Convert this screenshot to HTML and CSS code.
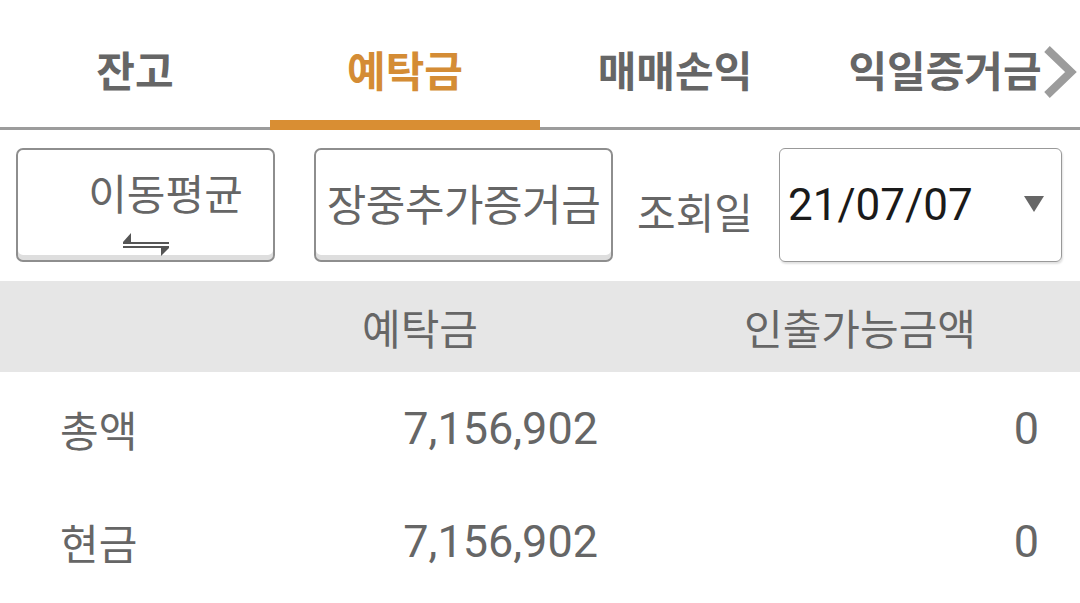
FILE: index.html
```html
<!DOCTYPE html>
<html lang="ko">
<head>
<meta charset="utf-8">
<link rel="stylesheet" href="styles.css">
</head>
<body>
<div class="tabs">
  <div class="tab">잔고</div>
  <div class="tab active">예탁금</div>
  <div class="tab">매매손익</div>
  <div class="tab last">익일증거금
    <svg class="chev" width="34" height="52" viewBox="0 0 34 52"><path d="M4 3 L28 26 L4 49" fill="none" stroke="#9c9c9c" stroke-width="8"/></svg>
  </div>
</div>
<div class="controls">
  <div class="btn btn-ma">
    <span class="btn-label">이동평균</span>
    <svg class="swap" width="48" height="24" viewBox="0 0 48 24"><path d="M1 10 H47 V12 H1 Z M1 10 L9 1 V10 Z" fill="#555"/><path d="M1 14 H47 V16 H1 Z M47 16 L39 24 V16 Z" fill="#555"/></svg>
  </div>
  <div class="btn btn-margin">장중추가증거금</div>
  <div class="date-label">조회일</div>
  <div class="select">
    <span class="date">21/07/07</span>
    <svg class="caret" width="20" height="17" viewBox="0 0 20 17"><path d="M0 1 H20 L10 17 Z" fill="#666"/></svg>
  </div>
</div>
<div class="table">
  <div class="row head">
    <div class="c1"></div>
    <div class="c2">예탁금</div>
    <div class="c3">인출가능금액</div>
  </div>
  <div class="row body">
    <div class="c1">총액</div>
    <div class="c2 num">7,156,902</div>
    <div class="c3 num">0</div>
  </div>
  <div class="row body">
    <div class="c1">현금</div>
    <div class="c2 num">7,156,902</div>
    <div class="c3 num">0</div>
  </div>
</div>
</body>
</html>
```

FILE: styles.css
```css
* { box-sizing: border-box; }
html, body { margin: 0; padding: 0; background: #fff; }
body {
  width: 1080px;
  height: 603px;
  overflow: hidden;
  font-family: "Noto Sans CJK KR", "Noto Sans", sans-serif;
  color: #666;
}

.tabs {
  display: flex;
  height: 130px;
}
.tab {
  flex: 1;
  display: flex;
  align-items: center;
  justify-content: center;
  padding-top: 10px;
  font-size: 42px;
  font-weight: 700;
  color: #666;
  border-bottom: 3px solid #9c9c9c;
  position: relative;
}
.tab.active {
  color: #d48c35;
  border-bottom: 10px solid #d98e33;
  padding-top: 17px;
}
.chev {
  position: absolute;
  right: 3px;
  top: 46px;
}

.controls {
  display: flex;
  align-items: center;
  padding: 18px 17px 0 16px;
}
.btn {
  height: 114px;
  border: 2px solid #8e8e8e;
  border-radius: 7px;
  box-shadow: inset 0 -5px 0 #dedede;
  background: #fff;
  font-size: 42px;
  color: #666;
}
.btn-ma {
  width: 259px;
  display: flex;
  flex-direction: column;
  align-items: center;
  padding-top: 14px;
}
.btn-label {
  line-height: 56px;
  padding-left: 40px;
}
.swap { margin-top: 12px; }
.btn-margin {
  width: 299px;
  margin-left: 39px;
  display: flex;
  align-items: center;
  justify-content: center;
  padding-bottom: 6px;
  font-size: 43px;
  letter-spacing: -0.5px;
}
.date-label {
  font-size: 42px;
  margin-left: 24px;
  padding-top: 10px;
  width: 142px;
}
.select {
  width: 283px;
  height: 114px;
  border: 1px solid #999;
  border-radius: 6px;
  box-shadow: 1px 2px 2px rgba(0,0,0,0.12);
  display: flex;
  align-items: center;
  padding: 0 17px 0 8px;
  justify-content: space-between;
}
.date {
  font-family: Roboto, "Noto Sans", sans-serif;
  font-size: 44px;
  color: #1a1a1a;
}
.caret { margin-top: -4px; }

.table { margin-top: 19px; }
.row {
  display: grid;
  grid-template-columns: 240px 360px 480px;
  align-items: center;
}
.row.head {
  height: 91px;
  background: #e6e6e6;
  font-size: 42px;
}
.row.head .c2, .row.head .c3 { text-align: center; }
.row.head .c3 { padding-left: 40px; }
.row.body {
  height: 113px;
  font-size: 42px;
}
.c1 { padding-left: 60px; }
.num {
  font-family: Roboto, "Noto Sans", sans-serif;
  font-size: 45px;
  text-align: right;
}
.c2.num { padding-right: 2px; }
.c3.num { padding-right: 41px; }
```
